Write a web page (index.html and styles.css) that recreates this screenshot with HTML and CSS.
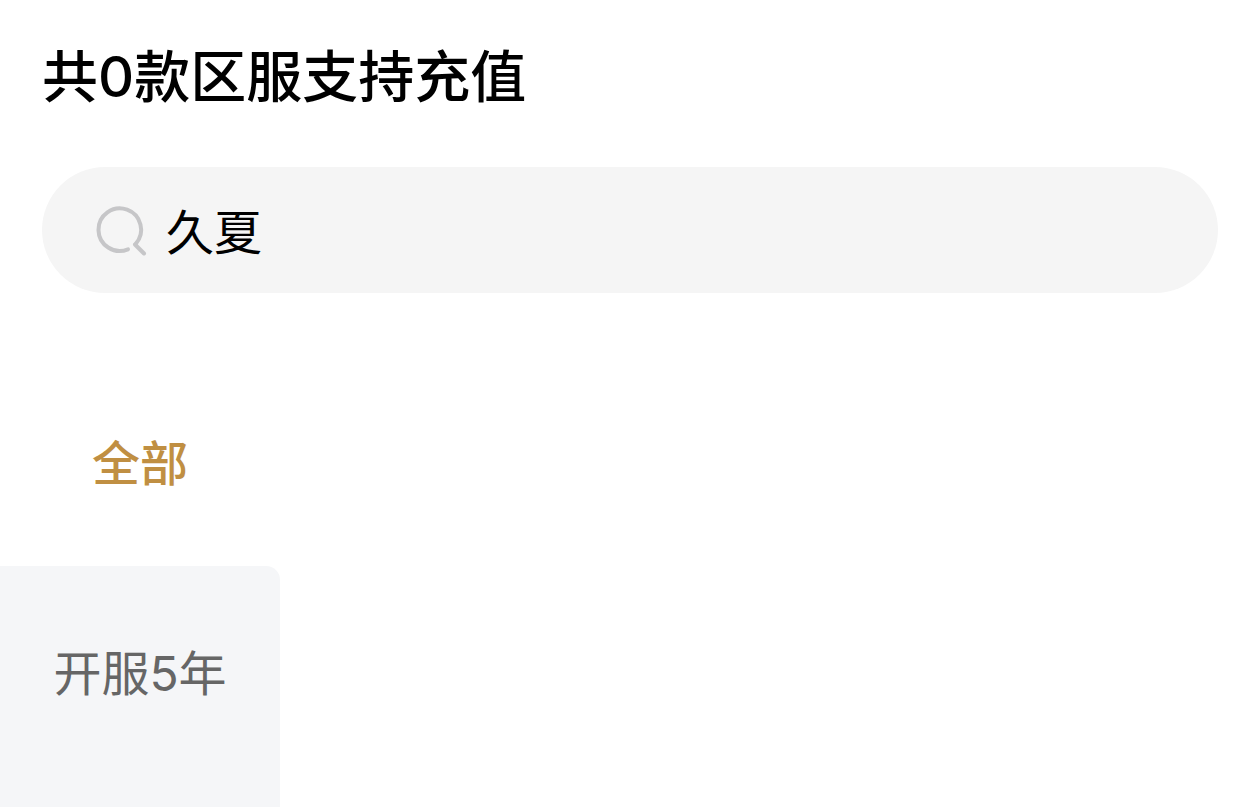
FILE: index.html
```html
<!DOCTYPE html>
<html lang="zh-CN">
<head>
<meta charset="utf-8">
<meta name="viewport" content="width=device-width, initial-scale=1">
<title>区服充值</title>
<link rel="stylesheet" href="styles.css">
</head>
<body>
<main class="page">
  <header class="head">
    <h1 class="title">共0款区服支持充值</h1>
    <label class="search">
      <svg class="search-icon" viewBox="0 0 56 56" aria-hidden="true">
        <path d="M36 47.3A21.3 21.3 0 1 1 43.7 41.8"/>
        <path d="M43 42.5L52 51.5"/>
      </svg>
      <input class="search-input" type="text" value="久夏" aria-label="搜索">
    </label>
  </header>
  <nav class="tabs">
    <button class="tab tab-active" type="button">全部</button>
    <button class="tab" type="button">开服5年</button>
  </nav>
</main>
</body>
</html>
```
FILE: styles.css
```css
* {
  box-sizing: border-box;
}

body {
  margin: 0;
  background: #fff;
  color: #000;
  font-family: Inter, "Noto Sans CJK SC", sans-serif;
}

.page {
  display: flex;
  flex-direction: column;
  min-height: 100vh;
}

.head {
  display: flex;
  flex-direction: column;
  gap: 50px;
  padding: 37px 42px 63px;
}

.title {
  margin: 0;
  font-size: 56px;
  line-height: 80px;
  font-weight: 500;
}

.search {
  display: flex;
  align-items: center;
  gap: 18px;
  height: 126px;
  padding: 0 50px;
  border-radius: 63px;
  background: #f5f5f5;
}

.search-icon {
  flex: none;
  width: 56px;
  height: 56px;
  fill: none;
  stroke: #c6c6c8;
  stroke-width: 4;
  stroke-linecap: round;
}

.search-input {
  flex: 1;
  min-width: 0;
  padding: 6px 0 0;
  border: 0;
  outline: 0;
  background: none;
  color: #000;
  font: 400 48px/72px Inter, "Noto Sans CJK SC", sans-serif;
}

.tabs {
  display: flex;
  flex: 1;
  flex-direction: column;
  width: 280px;
}

.tab {
  display: flex;
  align-items: flex-start;
  justify-content: center;
  padding: 72px 0 66px;
  border: 0;
  background: #f5f6f8;
  color: #666;
  font: 400 48px/72px Inter, "Noto Sans CJK SC", sans-serif;
}

.tab-active {
  background: #fff;
  color: #c08f42;
  font-weight: 500;
}

.tab-active + .tab {
  flex: 1;
  border-radius: 0 14px 0 0;
}
```
